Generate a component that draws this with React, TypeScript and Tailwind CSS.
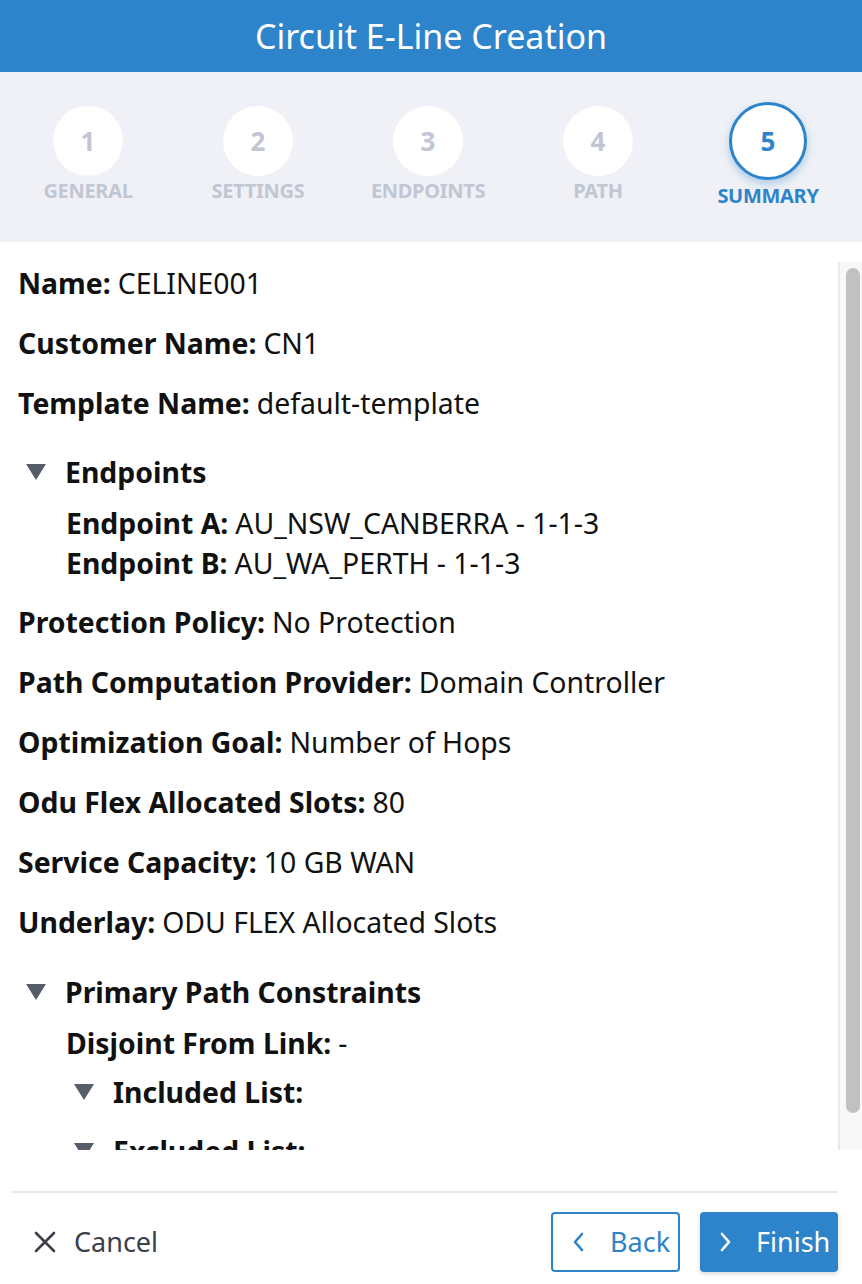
import React from 'react';

const steps = [
  { n: 1, label: 'GENERAL' },
  { n: 2, label: 'SETTINGS' },
  { n: 3, label: 'ENDPOINTS' },
  { n: 4, label: 'PATH' },
  { n: 5, label: 'SUMMARY', active: true },
];

function Caret() {
  return (
    <svg width="22" height="18" viewBox="0 0 22 18" className="shrink-0">
      <path d="M1 1 H21 L11 17 Z" fill="#575c6b" />
    </svg>
  );
}

function Row({ label, value }: { label: string; value: string }) {
  return (
    <div className="h-[60px] flex items-center">
      <span className="font-bold">{label}:</span>
      <span className="ml-[7px]">{value}</span>
    </div>
  );
}

export default function App() {
  return (
    <div
      className="w-[862px] h-[1284px] bg-white flex flex-col overflow-hidden text-[#111]"
      style={{ fontFamily: '"Noto Sans", Lato, sans-serif' }}
    >
      <header className="h-[72px] bg-[#2e84ca] flex items-center justify-center">
        <h1 className="text-white text-[34px] leading-none">Circuit E-Line Creation</h1>
      </header>

      <div className="h-[170px] bg-[#eff1f6] flex px-[3px] pt-[34px]">
        {steps.map((s) => (
          <div key={s.n} className="w-[170px] flex flex-col items-center">
            {s.active ? (
              <div className="w-[78px] h-[78px] -mt-[4px] rounded-full bg-white border-[3px] border-[#2e84ca] shadow-[0_4px_8px_rgba(46,132,202,0.35)] flex items-center justify-center text-[#2e84ca] font-bold text-[26px]">
                {s.n}
              </div>
            ) : (
              <div className="w-[70px] h-[70px] rounded-full bg-white flex items-center justify-center text-[#c2c6d2] font-bold text-[26px]">
                {s.n}
              </div>
            )}
            <div
              className={`text-[20px] font-bold tracking-[-0.3px] leading-none ${
                s.active ? 'text-[#2e84ca] mt-[6px]' : 'text-[#c2c6d2] mt-[5px]'
              }`}
            >
              {s.label}
            </div>
          </div>
        ))}
      </div>

      <div className="h-[908px] flex">
        <div className="flex-1 overflow-hidden pl-[18px] pt-[11px] text-[28.4px] leading-none">
          <Row label="Name" value="CELINE001" />
          <Row label="Customer Name" value="CN1" />
          <Row label="Template Name" value="default-template" />

          <div className="h-[70px] pt-[8px] flex items-center pl-[7px] gap-[18px]">
            <Caret />
            <span className="font-bold">Endpoints</span>
          </div>
          <div className="pl-[48px] mb-[9px]">
            <div className="h-[40px] flex items-center">
              <span className="font-bold">Endpoint A:</span>
              <span className="ml-[7px]">AU_NSW_CANBERRA - 1-1-3</span>
            </div>
            <div className="h-[40px] flex items-center">
              <span className="font-bold">Endpoint B:</span>
              <span className="ml-[7px]">AU_WA_PERTH - 1-1-3</span>
            </div>
          </div>

          <Row label="Protection Policy" value="No Protection" />
          <Row label="Path Computation Provider" value="Domain Controller" />
          <Row label="Optimization Goal" value="Number of Hops" />
          <Row label="Odu Flex Allocated Slots" value="80" />
          <Row label="Service Capacity" value="10 GB WAN" />
          <Row label="Underlay" value="ODU FLEX Allocated Slots" />

          <div className="h-[64px] pt-[16px] flex items-center pl-[7px] gap-[18px]">
            <Caret />
            <span className="font-bold">Primary Path Constraints</span>
          </div>
          <div className="h-[54px] flex items-center pl-[48px]">
            <span className="font-bold">Disjoint From Link:</span>
            <span className="ml-[7px]">-</span>
          </div>
          <div className="h-[44px] flex items-center pl-[55px] gap-[18px]">
            <Caret />
            <span className="font-bold">Included List:</span>
          </div>
          <div className="h-[66px] pt-[8px] flex items-center pl-[55px] gap-[18px]">
            <Caret />
            <span className="font-bold">Excluded List:</span>
          </div>
        </div>
        <div className="w-[24px] mt-[20px] border-l-2 border-[#e8e8e8] bg-[#f8f8f8] pl-[6px] pt-[6px] pb-[37px] flex">
          <div className="w-[14px] h-full rounded-full bg-[#c1c1c1]" />
        </div>
      </div>

      <div className="ml-[11px] mr-[24px] mt-[41px] border-t-2 border-[#e9e9ec]" />

      <footer className="flex items-center pl-[33px] pr-[24px] pt-[19px]">
        <button className="flex items-center gap-[17px] text-[#3b3f4a] text-[27px]">
          <svg width="24" height="24" viewBox="0 0 24 24">
            <path d="M3 3 L21 21 M21 3 L3 21" stroke="#3b3f4a" strokeWidth="2.6" strokeLinecap="round" />
          </svg>
          <span>Cancel</span>
        </button>
        <div className="ml-auto flex gap-[20px]">
          <button className="w-[129px] h-[60px] rounded-[4px] border-2 border-[#2e84ca] text-[#2e84ca] text-[27px] flex items-center pl-[19px] gap-[26px]">
            <svg width="12" height="20" viewBox="0 0 12 20">
              <path d="M10 2 L3 10 L10 18" stroke="#2e84ca" strokeWidth="2.6" fill="none" strokeLinecap="round" strokeLinejoin="round" />
            </svg>
            <span>Back</span>
          </button>
          <button className="w-[138px] h-[60px] rounded-[4px] bg-[#2e84ca] text-white text-[27px] flex items-center pl-[20px] gap-[24px] shadow-[0_2px_4px_rgba(0,0,0,0.15)]">
            <svg width="12" height="20" viewBox="0 0 12 20">
              <path d="M2 2 L9 10 L2 18" stroke="#ffffff" strokeWidth="2.6" fill="none" strokeLinecap="round" strokeLinejoin="round" />
            </svg>
            <span>Finish</span>
          </button>
        </div>
      </footer>
    </div>
  );
}
